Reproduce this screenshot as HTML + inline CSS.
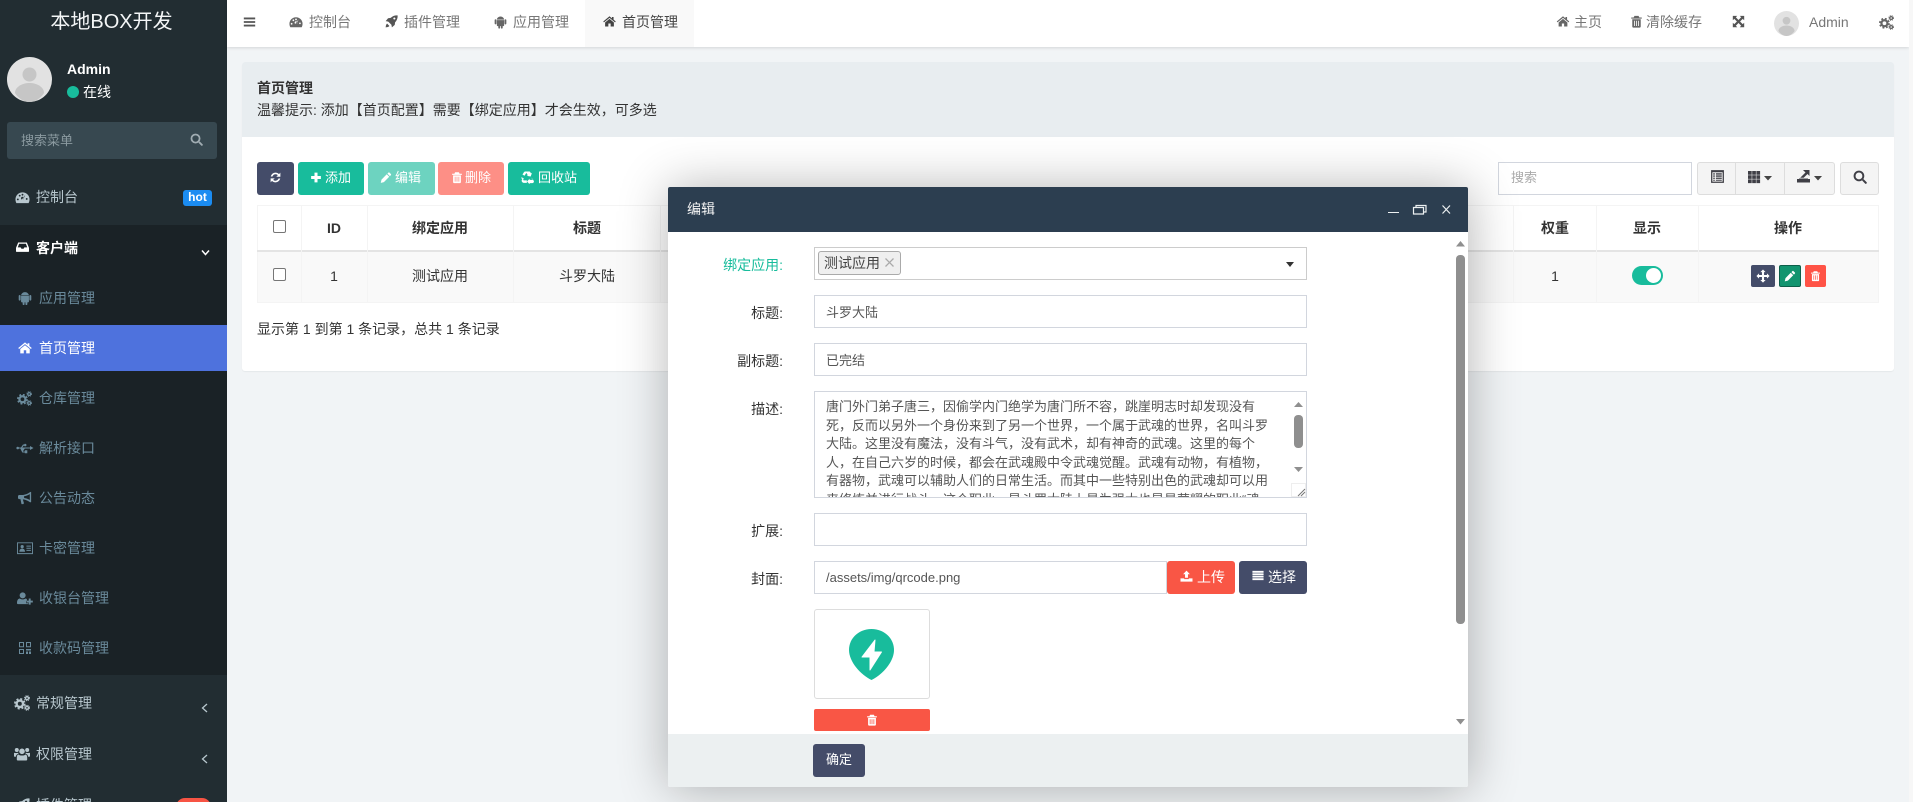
<!DOCTYPE html>
<html lang="zh"><head><meta charset="utf-8"><title>首页管理</title>
<style>
*{box-sizing:border-box}
html,body{margin:0;padding:0;width:1913px;height:802px;overflow:hidden;background:#f1f4f6}
body{position:relative;font:14px/20px "Liberation Sans","WenQuanYi Zen Hei","Noto Sans CJK SC",sans-serif;color:#333}
.b,.t,svg.i{position:absolute}
.t{white-space:nowrap;height:20px;line-height:20px}
.s{font-size:13px}
.c{transform:translateX(-50%)}
.r{transform:translateX(-100%)}
svg.i{fill:currentColor;overflow:visible}
.m{color:#6a8a9b}
.w{color:#fff}
.inp{position:absolute;background:#fff;border:1px solid #d2d6de;height:33px;left:814px;width:493px}
.btn{position:absolute;border-radius:3px;height:33px;top:162px}
.lab{color:#333}
</style></head><body>
<svg width="0" height="0" style="position:absolute">
<defs>
<symbol id="bars" viewBox="0 0 16 16"><path d="M1 2.500h14v2.200H1zM1 6.900h14v2.200H1zM1 11.300h14v2.200H1z"/></symbol>
<symbol id="dash" viewBox="0 0 16 16"><path fill-rule="evenodd" d="M8 2.500A7.500 7.500 0 0 0 .5 10c0 1.500.4 2.800 1 4h13c.6-1.200 1-2.500 1-4A7.500 7.500 0 0 0 8 2.500zM3 9a1 1 0 1 0 .01 0zM5 5a1 1 0 1 0 .01 0zM8 4a1 1 0 1 0 .01 0zM12.500 8.500a1 1 0 1 0 .01 0zM11 5l-2.300 5.200a1.600 1.600 0 1 0-1.400 0z"/></symbol>
<symbol id="rocket" viewBox="0 0 16 16"><path fill-rule="evenodd" d="M15.500.5c-3.300-.3-6.300.9-8.500 3.100L3.800 4 .8 7.500l3.200.6L7.900 12l.6 3.200 3.500-3 .4-3.200c2.200-2.200 3.400-5.200 3.100-8.500zM11.500 3a1.300 1.300 0 1 0 .01 0zM2.500 10.500C1 12 1 14 .8 15.200c1.200-.2 3.200-.2 4.700-1.700z"/></symbol>
<symbol id="android" viewBox="0 0 16 16"><path d="M3.500 5.700h9v6.300c0 .6-.4 1-1 1h-.8v2a1.100 1.100 0 0 1-2.200 0v-2H7.500v2a1.100 1.100 0 0 1-2.200 0v-2h-.8c-.6 0-1-.4-1-1zM.8 5.700a1.100 1.100 0 0 1 2.200 0v4.200a1.100 1.100 0 0 1-2.200 0zM13 5.700a1.100 1.100 0 0 1 2.200 0v4.200a1.100 1.100 0 0 1-2.200 0zM3.500 5.100C3.600 3.300 5.500 1.300 8 1.300s4.400 2 4.500 3.800z"/></symbol>
<symbol id="home" viewBox="0 0 16 16"><path d="M8 1.500.3 8l.9 1.100L8 3.500l6.800 5.600.9-1.100-2.700-2.300V2.500h-2v1.600zM8 4.800 2.600 9.200v5h4v-3.700h2.800v3.700h4v-5z"/></symbol>
<symbol id="trash" viewBox="0 0 16 16"><path fill-rule="evenodd" d="M5.500 1h5l1 2H14.500v1.500h-13V3h3zM2.800 5.200h10.400v9c0 .7-.5 1.300-1.200 1.300H4c-.7 0-1.200-.6-1.200-1.300zM5 7v6.500h1V7zM7.500 7v6.500h1V7zM10 7v6.500h1V7z"/></symbol>
<symbol id="expand" viewBox="0 0 16 16"><path d="M1 1h5.500L4.700 2.800 8 6.100l3.300-3.300L9.500 1H15v5.500l-1.800-1.800L9.900 8l3.300 3.300 1.800-1.800V15H9.500l1.800-1.800L8 9.900l-3.300 3.300L6.500 15H1V9.500l1.800 1.800L6.100 8 2.800 4.700 1 6.500z"/></symbol>
<symbol id="cogs" viewBox="0 0 16 16"><g fill="none" stroke="currentColor"><circle cx="5.800" cy="8.800" r="3.200" stroke-width="2.400"/><circle cx="5.800" cy="8.800" r="4.900" stroke-width="1.800" stroke-dasharray="2 1.900"/><circle cx="13" cy="3.200" r="1.500" stroke-width="1.400"/><circle cx="13" cy="3.200" r="2.500" stroke-width="1" stroke-dasharray="1 1"/><circle cx="13" cy="12.800" r="1.500" stroke-width="1.400"/><circle cx="13" cy="12.800" r="2.500" stroke-width="1" stroke-dasharray="1 1"/></g></symbol>
<symbol id="inbox" viewBox="0 0 16 16"><path fill-rule="evenodd" d="M2.700 2.500h10.600L16 9v4c0 .6-.4 1-1 1H1c-.6 0-1-.4-1-1V9zM3.800 4 2.200 8.500h3.500l1 1.700h2.600l1-1.700h3.500L12.200 4z"/></symbol>
<symbol id="search" viewBox="0 0 16 16"><circle cx="6.800" cy="6.800" r="5" fill="none" stroke="currentColor" stroke-width="2.200"/><path d="M10.300 11.900l1.600-1.600 3.600 3.600c.4.400.4 1 0 1.400l-.2.200c-.4.400-1 .4-1.400 0z"/></symbol>
<symbol id="refresh" viewBox="0 0 16 16"><path d="M2.200 6.700C3 3.800 5.300 2 8 2c1.700 0 3.200.7 4.300 1.800L14 2v5H9l1.900-1.900C10.100 4.400 9.100 4 8 4 6.200 4 4.800 5.200 4.300 6.700zM13.800 9.300C13 12.200 10.700 14 8 14c-1.700 0-3.200-.7-4.300-1.800L2 14V9h5l-1.900 1.900c.8.700 1.800 1.100 2.900 1.100 1.800 0 3.200-1.200 3.700-2.700z"/></symbol>
<symbol id="plus" viewBox="0 0 16 16"><path d="M6 1.500h4V6h4.500v4H10v4.500H6V10H1.500V6H6z"/></symbol>
<symbol id="pencil" viewBox="0 0 16 16"><path d="M11.200 1.500c.4-.4 1-.4 1.400 0l1.900 1.900c.4.400.4 1 0 1.400l-1.300 1.300L9.900 2.800zM9 3.700l3.300 3.300L5.200 14.200 1 15.200l1-4.300z"/></symbol>
<symbol id="recycle" viewBox="0 0 16 16"><path d="M5.200 1.200h4.900c.5 0 1 .3 1.200.7l1 1.700 1.200-.7-1.600 4.500-4.700-.8 1.200-.7-1.800-3-2.300 3.500-2.500-1.500 2-3.100c.4-.4.800-.6 1.400-.6zM.9 8.300l2.600 1.500-.7 1.300c-.3.500.1 1.100.7 1.100h3.700v3H3.300c-1.300 0-2.500-1.300-2.500-2.700 0-.5.1-.9.400-1.300l.5-.9-1.600-.9zM13.300 8.700l2.400 4c.7 1.300-.3 2.900-1.800 2.900h-3.300v1.400L7.400 13.500 10.600 10v1.500h3.200c.6 0 1-.6.700-1.100l-1.400-.9z"/></symbol>
<symbol id="usb" viewBox="0 0 18 16"><path d="M1.700 6.700a1.300 1.300 0 1 1-.01 2.600 1.300 1.300 0 0 1 .01-2.600zM2.500 7.500h11.500V6l3.500 2-3.500 2V8.500H8.800L6.800 11.500h2V10.300h2.500v2.900H8.800V12.500H6.300L4.300 8.500H2.500zM5 7.500l2-3h1.200a1.200 1.200 0 1 1 0 1.200H7.600L6.300 7.500z"/></symbol>
<symbol id="bull" viewBox="0 0 16 16"><path fill-rule="evenodd" d="M15 1v11.500L14 13C11 10.600 8 9.800 5.500 9.500L6.800 14l-.8 1H4L2.800 9.300H1.500C.7 9.300 0 8.600 0 7.800V6c0-.8.700-1.500 1.500-1.500H6C8 4.300 11 3.400 14 1.200zM13.500 3.500C11.500 4.800 9 5.600 7 5.900V8c2 .3 4.500 1 6.500 2.300z"/></symbol>
<symbol id="idc" viewBox="0 0 17 14"><path fill-rule="evenodd" d="M0 1h17v12.500H0zM1 2v10.500h15V2zM5.500 3.800a1.700 1.700 0 1 1-.01 3.400 1.700 1.700 0 0 1 .01-3.400zM2.500 11c0-2 1-3.300 3-3.300s3 1.300 3 3.300zM10 4.500h4.800v1H10zM10 6.800h4.800v1H10zM10 9h4.800v1H10z"/></symbol>
<symbol id="uplus" viewBox="0 0 17 14"><path d="M6 1a3.200 3.200 0 1 1-.01 6.400A3.200 3.200 0 0 1 6 1zM1 13.500c-.6 0-1-.4-1-1.200C0 9.800.8 7.700 3 7.500c.8.600 1.800 1 3 1s2.200-.4 3-1c.6.100 1.100.3 1.500.6v1.900h-.8v2.600h2.300v.9zM12.500 7.500h2v2.300h2.300v2h-2.300v2.300h-2v-2.300h-2.300v-2h2.300z"/></symbol>
<symbol id="qr" viewBox="0 0 14 14"><path fill-rule="evenodd" d="M1 1h5v5.300H1zM2 2v3.300h3V2zM8 1h5v5.300H8zM9 2v3.300h3V2zM1 8h5v5H1zM2 9v3h3V9zM8 8h5v1.500H8zM8 10.500h2V13H8zM11 10.500h2V13h-2z"/></symbol>
<symbol id="users" viewBox="0 0 16 14"><path d="M8 2a2.800 2.800 0 1 1-.01 5.600A2.800 2.800 0 0 1 8 2zM2.800 1.500a2 2 0 1 1-.01 4 2 2 0 0 1 .01-4zM13.200 1.500a2 2 0 1 1-.01 4 2 2 0 0 1 .01-4zM4.500 8c.8.900 2.100 1 3.500 1s2.700-.1 3.500-1c1.300.3 1.700 1.500 1.700 3.200v1.800c0 .6-.4 1-1 1H3.800c-.6 0-1-.4-1-1v-1.800C2.800 9.500 3.200 8.300 4.500 8zM0 6.500c.5-.4 1.200 0 2.800 0 .5 0 1 0 1.400-.2l.3 1C3 7.700 2 8.500 1.800 10.300H.8c-.5 0-.8-.4-.8-.8zM16 6.500c-.5-.4-1.200 0-2.800 0-.5 0-1 0-1.400-.2l-.3 1c1.500.4 2.500 1.200 2.700 3h1c.5 0 .8-.4.800-.8z"/></symbol>
<symbol id="table" viewBox="0 0 14 14"><path fill-rule="evenodd" d="M1 1h12v12H1zM2.200 3v8.800h9.600V3zM3 4h1.500v1.200H3zM5.500 4H11v1.200H5.500zM3 6h1.500v1.200H3zM5.500 6H11v1.200H5.500zM3 8h1.500v1.200H3zM5.500 8H11v1.200H5.500zM3 10h1.500v1H3zM5.500 10H11v1H5.500z"/></symbol>
<symbol id="th" viewBox="0 0 14 14"><path d="M1 1h3.700v3.700H1zM5.200 1h3.700v3.700H5.200zM9.400 1h3.700v3.700H9.400zM1 5.200h3.700v3.700H1zM5.200 5.200h3.700v3.700H5.200zM9.400 5.200h3.700v3.700H9.400zM1 9.400h3.700v3.700H1zM5.200 9.400h3.700v3.700H5.200zM9.400 9.400h3.700v3.700H9.400z"/></symbol>
<symbol id="export" viewBox="0 0 14 14"><path d="M0 10h13v3.500H0zM6 1h6.500v6l-2-2-3.800 3.800H3.200L8.500 3.500z"/><path d="M2 9.500h9v.5H2z"/></symbol>
<symbol id="move" viewBox="0 0 16 16"><path d="M8 .5l3 3H9.200v3.300h3.300V5l3 3-3 3V9.200H9.200v3.300H11l-3 3-3-3h1.800V9.200H3.500V11l-3-3 3-3v1.800h3.300V3.500H5z"/></symbol>
<symbol id="upl" viewBox="0 0 14 14"><path d="M7 .8l4 4.200H8.700v4H5.300V5H3zM0 9.800h4.300v.8h5.400v-.8H14V13.500H0z"/></symbol>
<symbol id="list" viewBox="0 0 14 14"><path d="M1 2h12v2H1zM1 4.700h12v1.900H1zM1 7.300h12v1.900H1zM1 9.900h12v2.100H1z"/></symbol>
<symbol id="avatar" viewBox="0 0 45 45"><circle cx="22.500" cy="22.500" r="22.500" fill="#e2e2e2"/><circle cx="22.500" cy="17.500" r="7" fill="#c6c6c6"/><path d="M8 36c0-6 7-10 14.500-10S37 30 37 36c-3.500 5.500-9 9-14.500 9S11.500 41.500 8 36z" fill="#c6c6c6"/></symbol>
</defs></svg>

<!-- sidebar -->
<div class="b" style="left:0;top:0;width:227px;height:802px;background:#222d32"></div>
<div class="b" style="left:0;top:225px;width:227px;height:450px;background:#1a2226"></div>
<div class="b" style="left:0;top:325px;width:227px;height:46px;background:#4e72dd"></div>
<div class="t c w" style="left:111.500px;top:10px;height:24px;line-height:24px;font-size:20px;color:#f4f6f7">本地BOX开发</div>
<svg class="i" style="left:7px;top:57px;width:45px;height:45px"><use href="#avatar"/></svg>
<div class="t w" style="left:67px;top:59px;font-weight:bold">Admin</div>
<div class="b" style="left:67px;top:86px;width:12px;height:12px;border-radius:50%;background:#18bc9c"></div>
<div class="t w" style="left:83px;top:82px">在线</div>
<div class="b" style="left:7px;top:122px;width:210px;height:37px;border-radius:3px;background:#374850"></div>
<div class="t s" style="left:21px;top:131px;color:#8b9aa0">搜索菜单</div>
<svg class="i" style="left:190px;top:133px;width:13px;height:13px;color:#a0acb2"><use href="#search"/></svg>

<svg class="i" style="left:15px;top:190px;width:15px;height:15px;color:#b8c7ce"><use href="#dash"/></svg>
<div class="t" style="left:36px;top:187px;color:#b8c7ce">控制台</div>
<div class="b" style="left:183px;top:190px;width:29px;height:16px;border-radius:3px;background:#1b8cf2;color:#fff;font-weight:bold;font-size:12px;line-height:15px;text-align:center">hot</div>

<svg class="i" style="left:16px;top:240px;width:13px;height:14px;color:#fff"><use href="#inbox"/></svg>
<div class="t w" style="left:36px;top:238px;font-weight:bold">客户端</div>
<svg class="i" style="left:201px;top:249px;width:9px;height:7px"><path d="M1 1.500 4.500 5.500 8 1.500" fill="none" stroke="#fff" stroke-width="1.500"/></svg>

<svg class="i m" style="left:18px;top:291px;width:14px;height:14px"><use href="#android"/></svg>
<div class="t m" style="left:39px;top:288px">应用管理</div>
<svg class="i" style="left:18px;top:341px;width:14px;height:14px;color:#fff"><use href="#home"/></svg>
<div class="t w" style="left:39px;top:338px">首页管理</div>
<svg class="i m" style="left:17px;top:391px;width:15px;height:15px"><use href="#cogs"/></svg>
<div class="t m" style="left:39px;top:388px">仓库管理</div>
<svg class="i m" style="left:16px;top:440px;width:18px;height:16px"><use href="#usb"/></svg>
<div class="t m" style="left:39px;top:438px">解析接口</div>
<svg class="i m" style="left:18px;top:491px;width:14px;height:14px"><use href="#bull"/></svg>
<div class="t m" style="left:39px;top:488px">公告动态</div>
<svg class="i m" style="left:17px;top:541px;width:16px;height:14px"><use href="#idc"/></svg>
<div class="t m" style="left:39px;top:538px">卡密管理</div>
<svg class="i m" style="left:17px;top:591px;width:16px;height:14px"><use href="#uplus"/></svg>
<div class="t m" style="left:39px;top:588px">收银台管理</div>
<svg class="i m" style="left:18px;top:641px;width:14px;height:14px"><use href="#qr"/></svg>
<div class="t m" style="left:39px;top:638px">收款码管理</div>

<svg class="i" style="left:14px;top:695px;width:16px;height:16px;color:#b8c7ce"><use href="#cogs"/></svg>
<div class="t" style="left:36px;top:693px;color:#b8c7ce">常规管理</div>
<svg class="i" style="left:201px;top:703px;width:7px;height:10px"><path d="M6 1 1.500 5 6 9" fill="none" stroke="#b8c7ce" stroke-width="1.300"/></svg>
<svg class="i" style="left:14px;top:746px;width:16px;height:15px;color:#b8c7ce"><use href="#users"/></svg>
<div class="t" style="left:36px;top:744px;color:#b8c7ce">权限管理</div>
<svg class="i" style="left:201px;top:754px;width:7px;height:10px"><path d="M6 1 1.500 5 6 9" fill="none" stroke="#b8c7ce" stroke-width="1.300"/></svg>
<svg class="i" style="left:16px;top:798px;width:14px;height:14px;color:#b8c7ce"><use href="#rocket"/></svg>
<div class="t" style="left:36px;top:795px;color:#b8c7ce">插件管理</div>
<div class="b" style="left:176px;top:798px;width:35px;height:18px;border-radius:9px;background:#f75444"></div>

<!-- navbar -->
<div class="b" style="left:227px;top:0;width:1682px;height:47px;background:#fff;box-shadow:0 1px 3px rgba(0,0,0,.12)"></div>
<div class="b" style="left:1909px;top:0;width:4px;height:802px;background:#f7f7f7"></div>
<div class="b" style="left:585px;top:0;width:109px;height:47px;background:#f9f9f9"></div>
<svg class="i" style="left:243px;top:15px;width:13px;height:14px;color:#555"><use href="#bars"/></svg>
<svg class="i" style="left:289px;top:15px;width:14px;height:14px;color:#666"><use href="#dash"/></svg>
<div class="t" style="left:309px;top:12px;color:#777">控制台</div>
<svg class="i" style="left:385px;top:15px;width:13px;height:13px;color:#555"><use href="#rocket"/></svg>
<div class="t" style="left:404px;top:12px;color:#777">插件管理</div>
<svg class="i" style="left:494px;top:15px;width:13px;height:14px;color:#666"><use href="#android"/></svg>
<div class="t" style="left:513px;top:12px;color:#777">应用管理</div>
<svg class="i" style="left:603px;top:15px;width:13px;height:13px;color:#444"><use href="#home"/></svg>
<div class="t" style="left:622px;top:12px;color:#444">首页管理</div>
<svg class="i" style="left:1556px;top:15px;width:14px;height:13px;color:#666"><use href="#home"/></svg>
<div class="t" style="left:1574px;top:12px;color:#777">主页</div>
<svg class="i" style="left:1630px;top:15px;width:13px;height:13px;color:#666"><use href="#trash"/></svg>
<div class="t" style="left:1646px;top:12px;color:#777">清除缓存</div>
<svg class="i" style="left:1732px;top:15px;width:13px;height:13px;color:#555"><use href="#expand"/></svg>
<svg class="i" style="left:1774px;top:11px;width:25px;height:25px"><use href="#avatar"/></svg>
<div class="t" style="left:1809px;top:12px;color:#777">Admin</div>
<svg class="i" style="left:1879px;top:15px;width:15px;height:15px;color:#666"><use href="#cogs"/></svg>

<!-- content panel -->
<div class="b" style="left:242px;top:62px;width:1652px;height:309px;background:#fff;border-radius:3px;box-shadow:0 1px 1px rgba(0,0,0,.05)"></div>
<div class="b" style="left:242px;top:62px;width:1652px;height:75px;background:#e8edf0;border-radius:3px 3px 0 0"></div>
<div class="t" style="left:257px;top:78px;font-weight:bold">首页管理</div>
<div class="t" style="left:257px;top:100px">温馨提示: 添加【首页配置】需要【绑定应用】才会生效，可多选</div>

<!-- toolbar -->
<div class="btn" style="left:257px;width:37px;background:#444c69"></div>
<svg class="i" style="left:269px;top:171px;width:13px;height:13px;color:#fff"><use href="#refresh"/></svg>
<div class="btn" style="left:298px;width:66px;background:#18bc9c"></div>
<svg class="i" style="left:310px;top:171px;width:12px;height:13px;color:#fff"><use href="#plus"/></svg>
<div class="t w s" style="left:325px;top:168px">添加</div>
<div class="btn" style="left:368px;width:67px;background:#6dd3c0"></div>
<svg class="i" style="left:380px;top:171px;width:12px;height:13px;color:#fff"><use href="#pencil"/></svg>
<div class="t w s" style="left:395px;top:168px">编辑</div>
<div class="btn" style="left:438px;width:66px;background:#fd8f86"></div>
<svg class="i" style="left:451px;top:171px;width:12px;height:13px;color:#fff"><use href="#trash"/></svg>
<div class="t w s" style="left:465px;top:168px">删除</div>
<div class="btn" style="left:508px;width:82px;background:#18bc9c"></div>
<svg class="i" style="left:521px;top:170px;width:13px;height:14px;color:#fff"><use href="#recycle"/></svg>
<div class="t w s" style="left:538px;top:168px">回收站</div>

<div class="b" style="left:1498px;top:162px;width:194px;height:33px;border:1px solid #d2d6de;background:#fff"></div>
<div class="t s" style="left:1511px;top:168px;color:#aaa">搜索</div>
<div class="b" style="left:1697px;top:162px;width:138px;height:33px;background:#f4f4f4;border:1px solid #ddd;border-radius:3px"></div>
<div class="b" style="left:1735px;top:162px;width:1px;height:33px;background:#ddd"></div>
<div class="b" style="left:1784px;top:162px;width:1px;height:33px;background:#ddd"></div>
<div class="b" style="left:1840px;top:162px;width:39px;height:33px;background:#f4f4f4;border:1px solid #ddd;border-radius:3px"></div>
<svg class="i" style="left:1710px;top:169px;width:15px;height:15px;color:#3f3f46"><use href="#table"/></svg>
<svg class="i" style="left:1747px;top:170px;width:14px;height:14px;color:#3f3f46"><use href="#th"/></svg>
<svg class="i" style="left:1764px;top:176px;width:8px;height:5px"><path d="M0 0h8L4 4.500z" fill="#444"/></svg>
<svg class="i" style="left:1797px;top:169px;width:14px;height:14px;color:#3f3f46"><use href="#export"/></svg>
<svg class="i" style="left:1814px;top:176px;width:8px;height:5px"><path d="M0 0h8L4 4.500z" fill="#444"/></svg>
<svg class="i" style="left:1853px;top:170px;width:14px;height:14px;color:#3f3f46"><use href="#search"/></svg>

<!-- table -->
<div class="b" style="left:257px;top:205px;width:1622px;height:98px;border:1px solid #f4f4f4;background:#fff"></div>
<div class="b" style="left:258px;top:250px;width:1620px;height:52px;background:#f9f9f9"></div>
<div class="b" style="left:257px;top:250px;width:1622px;height:2px;background:#e4e4e4"></div>
<div class="b" style="left:301px;top:205px;width:1px;height:98px;background:#f4f4f4"></div>
<div class="b" style="left:367px;top:205px;width:1px;height:98px;background:#f4f4f4"></div>
<div class="b" style="left:513px;top:205px;width:1px;height:98px;background:#f4f4f4"></div>
<div class="b" style="left:660px;top:205px;width:1px;height:98px;background:#f4f4f4"></div>
<div class="b" style="left:1513px;top:205px;width:1px;height:98px;background:#f4f4f4"></div>
<div class="b" style="left:1596px;top:205px;width:1px;height:98px;background:#f4f4f4"></div>
<div class="b" style="left:1698px;top:205px;width:1px;height:98px;background:#f4f4f4"></div>
<div class="b" style="left:273px;top:220px;width:13px;height:13px;border:1px solid #767676;border-radius:2px;background:#fff"></div>
<div class="b" style="left:273px;top:268px;width:13px;height:13px;border:1px solid #767676;border-radius:2px;background:#fff"></div>
<div class="t c" style="left:334px;top:218px;font-weight:bold">ID</div>
<div class="t c" style="left:440px;top:218px;font-weight:bold">绑定应用</div>
<div class="t c" style="left:587px;top:218px;font-weight:bold">标题</div>
<div class="t c" style="left:1555px;top:218px;font-weight:bold">权重</div>
<div class="t c" style="left:1647px;top:218px;font-weight:bold">显示</div>
<div class="t c" style="left:1788px;top:218px;font-weight:bold">操作</div>
<div class="t c" style="left:334px;top:266px">1</div>
<div class="t c" style="left:440px;top:266px">测试应用</div>
<div class="t c" style="left:587px;top:266px">斗罗大陆</div>
<div class="t c" style="left:1555px;top:266px">1</div>
<div class="b" style="left:1632px;top:266px;width:31px;height:19px;border-radius:10px;background:#18bc9c"></div>
<div class="b" style="left:1646px;top:268px;width:15px;height:15px;border-radius:50%;background:#fff"></div>
<div class="b" style="left:1751px;top:265px;width:24px;height:22px;border-radius:2px;background:#444c69"></div>
<svg class="i" style="left:1756px;top:269px;width:14px;height:14px;color:#fff"><use href="#move"/></svg>
<div class="b" style="left:1779px;top:265px;width:22px;height:22px;border-radius:2px;background:#12946f;border:1px solid #0d5f4a"></div>
<svg class="i" style="left:1784px;top:270px;width:12px;height:12px;color:#fff"><use href="#pencil"/></svg>
<div class="b" style="left:1805px;top:265px;width:21px;height:22px;border-radius:2px;background:#ff5346"></div>
<svg class="i" style="left:1810px;top:270px;width:11px;height:12px;color:#fff"><use href="#trash"/></svg>
<div class="t" style="left:257px;top:319px">显示第 1 到第 1 条记录，总共 1 条记录</div>

<!-- modal -->
<div class="b" style="left:668px;top:187px;width:800px;height:600px;background:#fff;border-radius:2px;box-shadow:1px 1px 50px rgba(0,0,0,.3)"></div>
<div class="b" style="left:668px;top:187px;width:800px;height:45px;background:#2c3e50;border-radius:2px 2px 0 0"></div>
<div class="t" style="left:687px;top:199px;color:#f4f4f4">编辑</div>
<svg class="i" style="left:1388px;top:205px;width:62px;height:10px"><path d="M0 7.500h11" stroke="#ecf0f1" stroke-width="1" fill="none"/><path d="M25.500 2.500h10v6.500h-10zM28 2.500v-2h10v6.500h-2.500" stroke="#ecf0f1" stroke-width="1.200" fill="none"/><path d="M54.500 .5l7.500 8M62 .5l-7.500 8" stroke="#ecf0f1" stroke-width="1.200" fill="none"/></svg>
<!-- modal scrollbar -->
<svg class="i" style="left:1456px;top:241px;width:9px;height:6px"><path d="M0 5.500h9L4.500 0z" fill="#8f8f8f"/></svg>
<div class="b" style="left:1456px;top:255px;width:9px;height:369px;border-radius:4px;background:#8f8f8f"></div>
<svg class="i" style="left:1456px;top:719px;width:9px;height:6px"><path d="M0 0h9L4.500 5.500z" fill="#8f8f8f"/></svg>

<div class="t r" style="left:783px;top:255px;color:#18bc9c">绑定应用:</div>
<div class="t r lab" style="left:783px;top:303px">标题:</div>
<div class="t r lab" style="left:783px;top:351px">副标题:</div>
<div class="t r lab" style="left:783px;top:399px">描述:</div>
<div class="t r lab" style="left:783px;top:521px">扩展:</div>
<div class="t r lab" style="left:783px;top:569px">封面:</div>

<div class="inp" style="top:247px;border-color:#ccc"></div>
<div class="b" style="left:818px;top:251px;width:83px;height:24px;background:#efefef;border:1px solid #aaa;border-radius:3px"></div>
<div class="t" style="left:824px;top:253px;color:#444">测试应用</div>
<svg class="i" style="left:885px;top:258px;width:9px;height:9px"><path d="M.5.500l8 8M8.500.5l-8 8" stroke="#aaa" stroke-width="1.300" fill="none"/></svg>
<svg class="i" style="left:1286px;top:262px;width:8px;height:5px"><path d="M0 0h8L4 5z" fill="#333"/></svg>

<div class="inp" style="top:295px"></div>
<div class="t s" style="left:826px;top:303px;color:#555">斗罗大陆</div>
<div class="inp" style="top:343px"></div>
<div class="t s" style="left:826px;top:351px;color:#555">已完结</div>

<div class="inp" style="top:391px;height:107px;overflow:hidden">
<div style="position:absolute;left:11px;top:6px;white-space:nowrap;font-size:13px;line-height:18.570px;color:#555">唐门外门弟子唐三，因偷学内门绝学为唐门所不容，跳崖明志时却发现没有<br>死，反而以另外一个身份来到了另一个世界，一个属于武魂的世界，名叫斗罗<br>大陆。这里没有魔法，没有斗气，没有武术，却有神奇的武魂。这里的每个<br>人，在自己六岁的时候，都会在武魂殿中令武魂觉醒。武魂有动物，有植物，<br>有器物，武魂可以辅助人们的日常生活。而其中一些特别出色的武魂却可以用<br>来修炼并进行战斗，这个职业，是斗罗大陆上最为强大也是最荣耀的职业“魂</div>
</div>
<div class="b" style="left:1291px;top:392px;width:15px;height:105px;background:#fff"></div>
<svg class="i" style="left:1294px;top:402px;width:9px;height:5px"><path d="M0 5h9L4.500 0z" fill="#8f8f8f"/></svg>
<div class="b" style="left:1294px;top:415px;width:9px;height:33px;border-radius:4px;background:#8f8f8f"></div>
<svg class="i" style="left:1294px;top:467px;width:9px;height:5px"><path d="M0 0h9L4.500 5z" fill="#8f8f8f"/></svg>
<div class="b" style="left:1291px;top:483px;width:15px;height:14px;background:#fff;border:1px solid #eee"></div>
<svg class="i" style="left:1298px;top:489px;width:7px;height:7px"><path d="M0 7 7 0M3 7l4-4" stroke="#777" fill="none"/></svg>

<div class="inp" style="top:513px"></div>
<div class="inp" style="top:561px;width:353px"></div>
<div class="t s" style="left:826px;top:568px;color:#555">/assets/img/qrcode.png</div>
<div class="b" style="left:1167px;top:561px;width:68px;height:33px;border-radius:3px;background:#f95645"></div>
<svg class="i" style="left:1180px;top:570px;width:13px;height:12px;color:#fff"><use href="#upl"/></svg>
<div class="t w" style="left:1197px;top:567px">上传</div>
<div class="b" style="left:1239px;top:561px;width:68px;height:33px;border-radius:3px;background:#444c69"></div>
<svg class="i" style="left:1251px;top:569px;width:14px;height:13px;color:#fff"><use href="#list"/></svg>
<div class="t w" style="left:1268px;top:567px">选择</div>

<div class="b" style="left:814px;top:609px;width:116px;height:90px;border:1px solid #ddd;border-radius:3px;background:#fff"></div>
<svg class="i" style="left:849px;top:629px;width:45px;height:51px" viewBox="0 0 45 51"><path d="M22.500 0C10 0 0 9 0 21c0 12 12 25 22.500 30C33 46 45 33 45 21 45 9 35 0 22.500 0z" fill="#18bc9c"/><path d="M26 11 13 28h8v13l11.500-18H25z" fill="#fff" stroke="#fff" stroke-width="1" stroke-linejoin="round"/></svg>
<div class="b" style="left:814px;top:709px;width:116px;height:22px;border-radius:2px;background:#f95645"></div>
<svg class="i" style="left:866px;top:714px;width:12px;height:12px;color:#fff"><use href="#trash"/></svg>

<div class="b" style="left:668px;top:734px;width:800px;height:53px;background:#ecf0f1;border-radius:0 0 2px 2px"></div>
<div class="b" style="left:813px;top:744px;width:52px;height:33px;border-radius:3px;background:#444c69"></div>
<div class="t w s" style="left:826px;top:750px">确定</div>
</body></html>
